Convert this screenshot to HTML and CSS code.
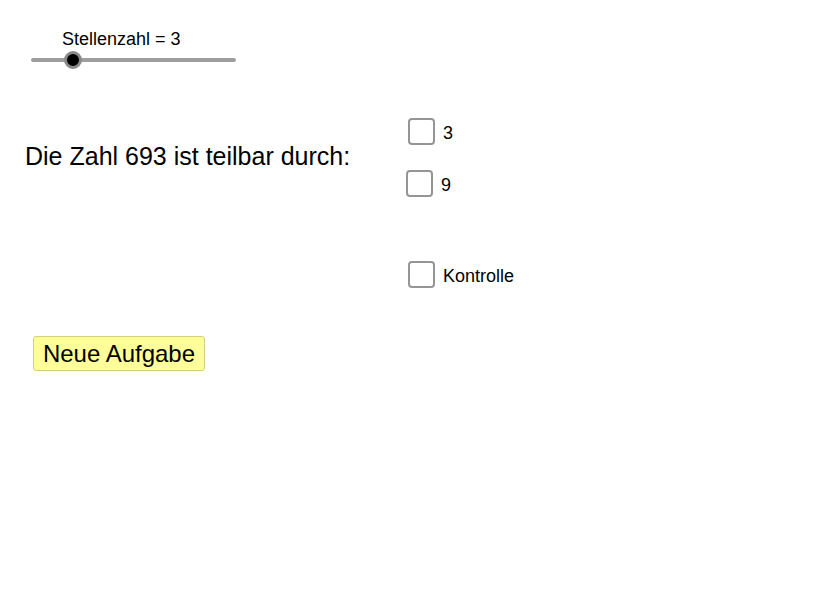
FILE: index.html
```html
<!DOCTYPE html>
<html lang="de">
<head>
<meta charset="utf-8">
<title>Teilbarkeit</title>
<link rel="stylesheet" href="styles.css">
</head>
<body>
<div class="app">
  <div class="slider">
    <div class="slider-label">Stellenzahl = 3</div>
    <div class="slider-track">
      <span class="slider-knob"></span>
    </div>
  </div>

  <div class="task">
    <div class="question">Die Zahl 693 ist teilbar durch:</div>
    <div class="options">
      <label class="check">
        <span class="box"></span>
        <span class="check-text">3</span>
      </label>
      <label class="check check-nine">
        <span class="box"></span>
        <span class="check-text">9</span>
      </label>
      <label class="check check-control">
        <span class="box"></span>
        <span class="check-text">Kontrolle</span>
      </label>
    </div>
  </div>

  <button class="new-task" type="button">Neue Aufgabe</button>
</div>
</body>
</html>
```

FILE: styles.css
```css
html, body {
  margin: 0;
  padding: 0;
  background: #ffffff;
}

body {
  font-family: "Liberation Sans", Arial, sans-serif;
  color: #000000;
  width: 836px;
  height: 599px;
  overflow: hidden;
}

.app {
  display: flex;
  flex-direction: column;
  align-items: flex-start;
}

/* Slider */
.slider {
  display: flex;
  flex-direction: column;
  align-items: flex-start;
}

.slider-label {
  margin: 29px 0 0 62px;
  font-size: 18px;
  line-height: 20px;
}

.slider-track {
  position: relative;
  margin: 9px 0 0 31px;
  width: 205px;
  height: 4px;
  border-radius: 2px;
  background: #9e9e9e;
}

.slider-knob {
  position: absolute;
  left: 33px;
  top: -7px;
  width: 18px;
  height: 18px;
  box-sizing: border-box;
  border-radius: 50%;
  background: #000000;
  border: 3px solid #8a8a8a;
}

/* Task row */
.task {
  display: flex;
  align-items: flex-start;
  margin-top: 56px;
}

.question {
  width: 383px;
  margin: 24px 0 0 25px;
  font-size: 25px;
  line-height: 28px;
}

.options {
  display: flex;
  flex-direction: column;
  align-items: flex-start;
}

.check {
  display: flex;
  align-items: flex-start;
  gap: 8px;
  font-size: 18px;
  line-height: 20px;
}

.check-nine {
  margin: 25px 0 0 -2px;
}

.check-control {
  margin-top: 64px;
}

.box {
  width: 27px;
  height: 27px;
  box-sizing: border-box;
  border: 2px solid #959595;
  border-radius: 4px;
  background: #ffffff;
}

.check-text {
  margin-top: 5px;
}

/* Button */
.new-task {
  margin: 48px 0 0 33px;
  width: 172px;
  height: 35px;
  box-sizing: border-box;
  padding: 0 0 1px;
  border: 1px solid #d2d27e;
  border-radius: 3px;
  background: #ffff99;
  font-family: "Liberation Sans", Arial, sans-serif;
  font-size: 24px;
  line-height: 31px;
  color: #000000;
  text-align: center;
}
```
